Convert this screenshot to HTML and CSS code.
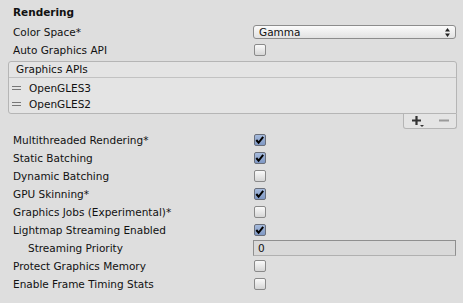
FILE: index.html
```html
<!DOCTYPE html>
<html lang="en">
<head>
    <meta charset="UTF-8">
    <title>Player Settings - Rendering</title>
    <link rel="stylesheet" href="styles.css">
</head>
<body>
    <div class="panel">
        <div class="title">Rendering</div>

        <div class="row">
            <span class="label">Color Space*</span>
            <div class="dropdown">
                <span>Gamma</span>
                <svg class="arrows" width="5" height="9" viewBox="0 0 5 9">
                    <path d="M2.5 0 L5 3.5 L0 3.5 Z M0 5.5 L5 5.5 L2.5 9 Z" fill="#222"/>
                </svg>
            </div>
        </div>

        <div class="row">
            <span class="label">Auto Graphics API</span>
            <span class="check"></span>
        </div>

        <!-- reorderable list -->
        <div class="list">
            <div class="list-header">Graphics APIs</div>
            <div class="list-body">
                <div class="list-item"><span class="handle"></span>OpenGLES3</div>
                <div class="list-item"><span class="handle"></span>OpenGLES2</div>
            </div>
        </div>
        <div class="list-footer">
            <div class="footer-tab">
                <svg width="14" height="12" viewBox="0 0 14 12">
                    <path d="M1 5.5 H10 M5.5 1 V10" stroke="#333" stroke-width="2.2" fill="none"/>
                    <path d="M9 10 H13 L11 12 Z" fill="#333"/>
                </svg>
                <svg width="12" height="12" viewBox="0 0 12 12">
                    <path d="M1 5.5 H11" stroke="#9a9a9a" stroke-width="2" fill="none"/>
                </svg>
            </div>
        </div>

        <div class="row">
            <span class="label">Multithreaded Rendering*</span>
            <span class="check on"><svg viewBox="0 0 12 12"><path d="M2.5 6 L5 9 L10 2.5" stroke="#000" stroke-width="2.2" fill="none"/></svg></span>
        </div>
        <div class="row">
            <span class="label">Static Batching</span>
            <span class="check on"><svg viewBox="0 0 12 12"><path d="M2.5 6 L5 9 L10 2.5" stroke="#000" stroke-width="2.2" fill="none"/></svg></span>
        </div>
        <div class="row">
            <span class="label">Dynamic Batching</span>
            <span class="check"></span>
        </div>
        <div class="row">
            <span class="label">GPU Skinning*</span>
            <span class="check on"><svg viewBox="0 0 12 12"><path d="M2.5 6 L5 9 L10 2.5" stroke="#000" stroke-width="2.2" fill="none"/></svg></span>
        </div>
        <div class="row">
            <span class="label">Graphics Jobs (Experimental)*</span>
            <span class="check"></span>
        </div>
        <div class="row">
            <span class="label">Lightmap Streaming Enabled</span>
            <span class="check on"><svg viewBox="0 0 12 12"><path d="M2.5 6 L5 9 L10 2.5" stroke="#000" stroke-width="2.2" fill="none"/></svg></span>
        </div>
        <div class="row">
            <span class="label indent">Streaming Priority</span>
            <div class="number-field">0</div>
        </div>
        <div class="row">
            <span class="label">Protect Graphics Memory</span>
            <span class="check"></span>
        </div>
        <div class="row">
            <span class="label">Enable Frame Timing Stats</span>
            <span class="check"></span>
        </div>
    </div>
</body>
</html>
```

FILE: styles.css
```css
body {
  margin: 0;
  background: #dedede;
  font-family: "DejaVu Sans", sans-serif;
  font-size: 10.5px;
  color: #111;
}

.panel {
  padding: 3px 6px 0 8px;
}

.title {
  height: 20px;
  line-height: 18px;
  padding-left: 5px;
  font-weight: bold;
}

.row {
  display: flex;
  align-items: center;
  height: 18px;
  padding-left: 5px;
}

.label {
  width: 240px;
  flex: none;
}

.label.indent {
  padding-left: 15px;
  width: 225px;
}

.dropdown {
  flex: 1;
  height: 12px;
  display: flex;
  align-items: center;
  justify-content: space-between;
  padding: 0 5px 0 5px;
  border: 1px solid #8c8c8c;
  border-radius: 3px;
  background: linear-gradient(#fbfbfb, #e2e2e2);
  margin-right: 1px;
}

.check {
  width: 10px;
  height: 10px;
  margin-left: 1px;
  border: 1px solid #8a8a8a;
  border-radius: 2px;
  background: linear-gradient(#fafafa, #d6d6d6);
  display: flex;
}

.check.on {
  background: linear-gradient(#a6bbdc, #7f98c4);
  border-color: #6a6f7a;
}

.check svg {
  width: 12px;
  height: 12px;
  margin: -1px 0 0 -1px;
}

.list {
  margin-top: 2px;
  border: 1px solid #b5b5b5;
  border-radius: 3px 3px 0 3px;
  background: #e4e4e4;
}

.list-header {
  height: 15px;
  line-height: 15px;
  padding-left: 7px;
  border-bottom: 1px solid #c2c2c2;
}

.list-body {
  padding: 2px 0 1px 0;
}

.list-item {
  display: flex;
  align-items: center;
  height: 16px;
  padding-left: 3px;
}

.handle {
  width: 9px;
  height: 2px;
  border-top: 1px solid #777;
  border-bottom: 1px solid #777;
  margin-right: 8px;
}

.list-footer {
  display: flex;
  justify-content: flex-end;
}

.footer-tab {
  width: 52px;
  height: 14px;
  display: flex;
  align-items: center;
  justify-content: space-around;
  border: 1px solid #b5b5b5;
  border-top: none;
  border-radius: 0 0 3px 3px;
  background: #e4e4e4;
}

.list-footer + .row {
  margin-top: 2px;
}

.number-field {
  flex: 1;
  height: 14px;
  line-height: 14px;
  padding-left: 4px;
  border: 1px solid #8f8f8f;
  border-bottom-color: #b0b0b0;
  background: #d9d9d9;
  margin-right: 1px;
}
```
